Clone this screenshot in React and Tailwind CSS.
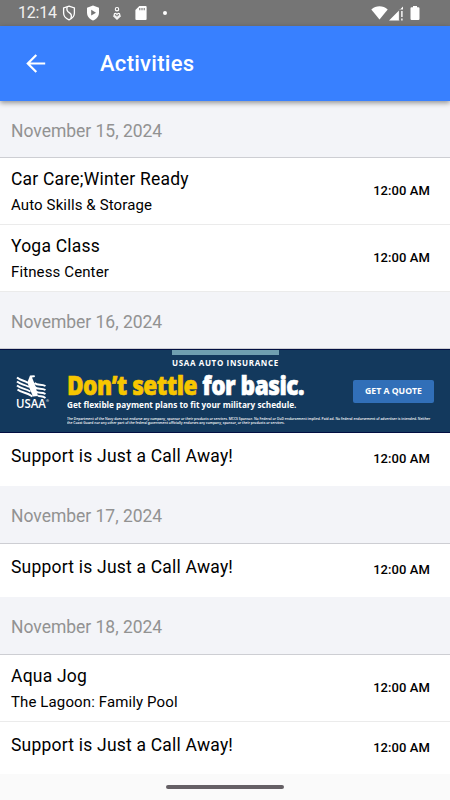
import React from "react";

function StatusBar() {
  return (
    <div className="flex h-[26px] items-center justify-between bg-[#757575] pl-[18px] pr-[30px] text-white">
      <div className="flex items-center">
        <span className="w-[39px] whitespace-nowrap text-[16px] leading-[26px] tracking-[-0.2px] text-[#f0f0f0]">12:14</span>
        <svg className="ml-[5px] h-4 w-[14px]" viewBox="0 0 14 16" fill="none" stroke="#fff" strokeWidth="1.3">
          <path d="M7 1.2 L12.4 3 V8 C12.4 11.4 10 13.6 7 14.8 C4 13.6 1.6 11.4 1.6 8 V3 Z" />
          <path d="M5.2 2 C4.2 5 5 6.3 7.2 7.6 C9.6 9 10 10.8 8.8 13.6" />
        </svg>
        <svg className="ml-[10px] h-4 w-[14px]" viewBox="0 0 14 16">
          <path d="M7 .5 L13 2.8 V7.5 C13 11.4 10.4 14.2 7 15.5 C3.6 14.2 1 11.4 1 7.5 V2.8 Z" fill="#fff" />
          <path d="M5.2 4.8 L10 7.7 L5.2 10.6 Z" fill="#757575" />
        </svg>
        <svg className="ml-[12px] h-[14px] w-[10px]" viewBox="0 0 10 14" fill="none" stroke="#fff" strokeWidth="1.1">
          <circle cx="5" cy="3.2" r="1.7" />
          <path d="M5 8.6 C4.2 6.8 2.3 7.1 2.2 8.4 C2.2 9.6 4 10.6 5 11.6 C6 10.6 7.8 9.6 7.8 8.4 C7.7 7.1 5.8 6.8 5 8.6 Z" />
          <path d="M1.2 9.6 L5 13.2 L8.8 9.6" />
        </svg>
        <svg className="ml-[13px] h-[14px] w-[12px]" viewBox="0 0 12 14">
          <path d="M4.4 0 H10.6 Q11.6 0 11.6 1 V13 Q11.6 14 10.6 14 H1.4 Q.4 14 .4 13 V4 Z" fill="#fff" />
          <path d="M4.8 2 V4.2 M7 2 V4.2 M9.2 2 V4.2" stroke="#757575" strokeWidth="1.1" />
        </svg>
        <span className="ml-[16px] h-1 w-1 rounded-full bg-white" />
      </div>
      <div className="flex items-center">
        <svg className="h-[14px] w-[17px]" viewBox="0 0 17 14">
          <path d="M.3 3.6 C5-.8 12-.8 16.7 3.6 L8.5 13.6 Z" fill="#fff" />
        </svg>
        <svg className="ml-[1px] h-[15px] w-[15px]" viewBox="0 0 15 15" fill="#fff">
          <path d="M0 14.4 L14 .6 V3.4 H10.4 V14.4 Z" />
          <path d="M10.4 4 V14.4" stroke="#757575" strokeWidth="1" />
          <path d="M12.2 5 H13.6 V11 H12.2 Z M12.2 12.6 H13.6 V14.4 H12.2 Z" />
        </svg>
        <svg className="ml-[6px] h-[14px] w-[10px]" viewBox="0 0 10 14">
          <path d="M3 0 H7 V1.2 H8.4 Q9.5 1.2 9.5 2.3 V12.8 Q9.5 14 8.4 14 H1.6 Q.5 14 .5 12.8 V2.3 Q.5 1.2 1.6 1.2 H3 Z" fill="#fff" />
        </svg>
      </div>
    </div>
  );
}

function Header() {
  return (
    <header className="relative z-10 flex h-[75px] items-center bg-[#3880ff] pl-[26px] text-white shadow-[0_2px_5px_rgba(0,0,0,0.4)]">
      <svg className="h-5 w-5" viewBox="0 0 20 20" fill="none" stroke="#fff" strokeWidth="2.2">
        <path d="M19.2 9.5 H2 M10.3 1 L1.8 9.5 L10.3 18" />
      </svg>
      <h1 className="ml-[54px] text-[22px] font-medium leading-[30px] tracking-[0.28px]">Activities</h1>
    </header>
  );
}

function DateHeading({ children, tall }) {
  return (
    <h2 className={`flex items-center border-b border-[#cdced3] bg-[#f3f4f8] pl-[11px] text-[17.5px] tracking-[-0.02px] text-[#929292] ${tall ? "h-[58px] pt-[3px]" : "h-[57px] pt-[4px]"}`}>
      {children}
    </h2>
  );
}

function Event({ title, place, divider, last }) {
  return (
    <div className={`flex justify-between bg-white pl-[11px] pr-[20px] text-black ${place ? "h-[67px]" : last ? "h-[52px]" : "h-[53px]"} ${divider ? "border-b border-[#ebebeb]" : ""}`}>
      <div className={place ? "pt-[10px]" : "pt-[12px]"}>
        <div className="whitespace-nowrap text-[17.5px] leading-[22px] tracking-[0.21px]">{title}</div>
        {place && <div className="mt-[4px] whitespace-nowrap text-[15px] leading-[22px] tracking-[0.12px]">{place}</div>}
      </div>
      <span className={`whitespace-nowrap text-[13px] font-medium leading-4 tracking-[0.08px] ${place ? "pt-[25px]" : "pt-[18px]"}`}>12:00 AM</span>
    </div>
  );
}

function Banner() {
  return (
    <div className="flex h-[84px] border-y border-[#020f42] bg-[#13395d] font-['Open_Sans',sans-serif] text-white">
      <div className="w-[67px] shrink-0 pl-[16px] pt-[24px]">
        <svg className="h-[25px] w-[31px]" viewBox="0 0 31 25" fill="none" stroke="#fff" strokeWidth="2">
          <path d="M1 3.5 C5 7 8 6 12 9 M1 7.5 C5 11 8 10 13 13 M1 11.5 C5 15 9 14 14.5 17.5 M1.5 15.5 C6 19 10 18 16.5 22.5" />
          <path d="M18.5 9 C22 12 25 9.5 29.5 12 M18.5 13 C22 16 25 13.5 29.5 16 M20 17.5 C23 20 25 17.5 29.5 20 M22 21.5 C24 23 26 21.5 29.5 24" />
          <path d="M11.5 8 L14 1.5 L18.5 1.2 L19 3 L16 3.5 L19.5 12 L22 22 L17 22.5 L12.5 12 Z" fill="#fff" stroke="none" />
        </svg>
        <div className="flex origin-left scale-x-[.88] text-[13px] font-semibold leading-[9px]">USAA<span className="text-[4px] leading-[4px]">®</span></div>
      </div>
      <div className="w-[285px] shrink-0 whitespace-nowrap">
        <div className="ml-[105px] h-[5px] w-[107px] bg-[#6f9fb0]" />
        <div className="ml-[105px] mt-[2px] text-[8px] font-bold leading-[12px] tracking-[0.64px]">USAA AUTO INSURANCE</div>
        <div className="h-[29px] w-max origin-left scale-x-[.855] text-[26.5px] font-extrabold leading-[32px] tracking-[-0.6px] [-webkit-text-stroke:0.6px]"><span className="text-[#f7c600]">Don’t settle</span> for basic.</div>
        <div className="h-[12px] w-max origin-left scale-x-[.915] text-[9px] font-bold leading-[13px]">Get flexible payment plans to fit your military schedule.</div>
        <div className="mt-[6px] w-max h-[10px] origin-top-left scale-x-[.375] scale-y-[.4] text-[9px] font-semibold leading-[11px]">
          <div>The Department of the Navy does not endorse any company, sponsor or their products or services. MCCS Sponsor. No Federal or DoD endorsement implied. Paid ad. No federal endorsement of advertiser is intended. Neither</div>
          <div>the Coast Guard nor any other part of the federal government officially endorses any company, sponsor, or their products or services.</div>
        </div>
      </div>
      <div className="ml-px mt-[30px] flex h-[23px] w-[81px] shrink-0 items-center justify-center whitespace-nowrap rounded-[2px] bg-[#316fb8] text-[8.7px] font-bold">GET A QUOTE</div>
    </div>
  );
}

export default function App() {
  return (
    <main className="flex h-[800px] w-[450px] flex-col overflow-hidden bg-[#fafafa] font-[Roboto,sans-serif]">
      <StatusBar />
      <Header />
      <DateHeading>November 15, 2024</DateHeading>
      <Event title="Car Care;Winter Ready" place="Auto Skills & Storage" divider />
      <Event title="Yoga Class" place="Fitness Center" divider />
      <DateHeading>November 16, 2024</DateHeading>
      <Banner />
      <Event title="Support is Just a Call Away!" />
      <DateHeading tall>November 17, 2024</DateHeading>
      <Event title="Support is Just a Call Away!" />
      <DateHeading tall>November 18, 2024</DateHeading>
      <Event title="Aqua Jog" place="The Lagoon: Family Pool" divider />
      <Event title="Support is Just a Call Away!" last />
      <footer className="flex flex-1 items-center justify-center">
        <div className="h-1 w-[118px] rounded-full bg-[#656065]" />
      </footer>
    </main>
  );
}
